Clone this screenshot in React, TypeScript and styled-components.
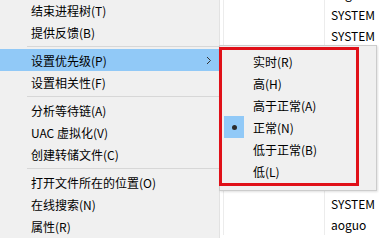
import React from 'react';
import styled, { createGlobalStyle } from 'styled-components';

const GlobalStyle = createGlobalStyle`
  html, body {
    margin: 0;
    padding: 0;
    background: #ffffff;
    overflow: hidden;
  }
  body {
    font-family: "Noto Sans CJK SC", "Microsoft YaHei", sans-serif;
    font-size: 12px;
    color: #000;
  }
`;

type MenuEntry = { label: string; active?: boolean; submenu?: boolean } | 'sep';

const mainItems: MenuEntry[] = [
  { label: '结束进程树(T)' },
  { label: '提供反馈(B)' },
  'sep',
  { label: '设置优先级(P)', active: true, submenu: true },
  { label: '设置相关性(F)' },
  'sep',
  { label: '分析等待链(A)' },
  { label: 'UAC 虚拟化(V)' },
  { label: '创建转储文件(C)' },
  'sep',
  { label: '打开文件所在的位置(O)' },
  { label: '在线搜索(N)' },
  { label: '属性(R)' },
];

const priorities = [
  { label: '实时(R)' },
  { label: '高(H)' },
  { label: '高于正常(A)' },
  { label: '正常(N)', checked: true },
  { label: '低于正常(B)' },
  { label: '低(L)' },
];

// user name column of the process list behind the menu
const users = [
  'aoguo', 'SYSTEM', 'SYSTEM', 'SYSTEM', 'SYSTEM', 'SYSTEM', 'SYSTEM',
  'SYSTEM', 'SYSTEM', 'SYSTEM', 'SYSTEM', 'aoguo',
];

const App: React.FC = () => {
  return (
    <>
      <GlobalStyle />
      <Screen>
        <ProcessList>
          {users.map((u, i) => (
            <ListRow key={i} first={i === 0}>
              <NameCell />
              <StatusCell />
              <UserCell>{u}</UserCell>
            </ListRow>
          ))}
        </ProcessList>

        <ContextMenu>
          {mainItems.map((item, i) =>
            item === 'sep' ? (
              <Separator key={i} />
            ) : (
              <MenuItem key={i} active={item.active}>
                <span>{item.label}</span>
                {item.submenu && (
                  <Chevron width="6" height="9" viewBox="0 0 6 9">
                    <path d="M1 1 L4.5 4.5 L1 8" fill="none" stroke="#333" strokeWidth="1" />
                  </Chevron>
                )}
              </MenuItem>
            )
          )}
        </ContextMenu>

        <SubMenu>
          {priorities.map((p, i) => (
            <SubItem key={i}>
              <CheckBox checked={p.checked}>{p.checked && <Dot />}</CheckBox>
              <SubLabel>{p.label}</SubLabel>
            </SubItem>
          ))}
          <Annotation />
        </SubMenu>
      </Screen>
    </>
  );
};

const Screen = styled.div`
  position: relative;
  width: 379px;
  height: 238px;
  overflow: hidden;
  background: #fff;
`;

const ProcessList = styled.div`
  display: flex;
  flex-direction: column;
  padding-top: 4px;
`;

const ListRow = styled.div<{ first?: boolean }>`
  display: grid;
  grid-template-columns: 224px 101px 1fr;
  height: 21px;
  margin-top: ${(p) => (p.first ? '-21px' : '0')};
  line-height: 21px;
`;

const NameCell = styled.div`
  border-right: 1px solid #ececec;
`;

const StatusCell = styled.div`
  border-right: 1px solid #ececec;
`;

const UserCell = styled.div`
  padding-left: 6px;
  white-space: nowrap;
  color: #000;
`;

const ContextMenu = styled.div`
  position: absolute;
  left: 0;
  top: -1px;
  width: 219px;
  height: 250px;
  background: #f0f0f0;
  border-right: 1px solid #e2e2e2;
  display: flex;
  flex-direction: column;
`;

const MenuItem = styled.div<{ active?: boolean }>`
  display: flex;
  align-items: center;
  justify-content: space-between;
  height: 22px;
  padding: 0 7px 0 31px;
  background: ${(p) => (p.active ? '#91c9f7' : 'transparent')};
  white-space: nowrap;
`;

const Chevron = styled.svg`
  display: block;
`;

const Separator = styled.div`
  height: 6px;
  display: flex;
  align-items: center;
  padding-left: 27px;

  &::after {
    content: '';
    flex: 1;
    height: 1px;
    background: #d7d7d7;
  }
`;

const SubMenu = styled.div`
  position: absolute;
  left: 219px;
  top: 45px;
  width: 156px;
  height: 140px;
  padding-top: 4px;
  box-sizing: content-box;
  background: #f0f0f0;
  border: 1px solid #cccccc;
  box-shadow: 1px 1px 2px rgba(0, 0, 0, 0.12);
  display: flex;
  flex-direction: column;
`;

const SubItem = styled.div`
  display: flex;
  align-items: center;
  height: 22px;
  padding-left: 4px;
`;

const CheckBox = styled.div<{ checked?: boolean }>`
  width: 20px;
  height: 22px;
  display: flex;
  align-items: center;
  justify-content: center;
  background: ${(p) => (p.checked ? '#91c9f7' : 'transparent')};
`;

const Dot = styled.span`
  width: 5px;
  height: 5px;
  border-radius: 50%;
  background: #2b2b2b;
`;

const SubLabel = styled.span`
  margin-left: 9px;
  white-space: nowrap;
`;

const Annotation = styled.div`
  position: absolute;
  left: -1px;
  top: 1px;
  width: 134px;
  height: 133px;
  border: 3px solid #e01018;
  pointer-events: none;
`;

export default App;
